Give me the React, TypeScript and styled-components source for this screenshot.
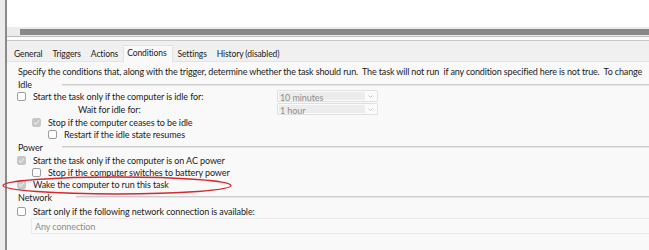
import styled, { createGlobalStyle } from "styled-components";

const GlobalStyle = createGlobalStyle`
  html, body {
    margin: 0;
    padding: 0;
    background: #f9f9f9;
  }
`;

const Frame = styled.div`
  position: relative;
  width: 649px;
  height: 250px;
  overflow: hidden;
  display: flex;
  font-family: Lato, "Noto Sans", sans-serif;
  font-size: 9px;
  letter-spacing: -0.1px;
  color: #1c1c1c;
`;

const Gutter = styled.div`
  width: 5px;
  flex: none;
  background: #ececec;
  border-right: 2px solid #8b8b8b;
`;

const Main = styled.div`
  flex: 1;
  min-width: 0;
  display: flex;
  flex-direction: column;
`;

const ListArea = styled.div`
  height: 27px;
  flex: none;
  background: #ffffff;
`;

const HScroll = styled.div`
  height: 9px;
  flex: none;
  box-sizing: border-box;
  padding: 2px 0 1px 13px;
  background: #ebebeb;
  display: flex;
`;

const Thumb = styled.div`
  flex: 1;
  background: #888888;
`;

const Splitter = styled.div`
  height: 5px;
  flex: none;
  box-sizing: border-box;
  border-top: 1px solid #bcbcbc;
  border-bottom: 1px solid #c8c8c8;
  background: #fbfbfb;
`;

const TabBar = styled.div`
  height: 21px;
  flex: none;
  box-sizing: border-box;
  display: flex;
  align-items: flex-end;
  padding-left: 2px;
  background: #f0f0f0;
  border-bottom: 1px solid #e4e4e4;
`;

const Tab = styled.div<{ $active?: boolean }>`
  height: ${(p) => (p.$active ? 17 : 15)}px;
  line-height: 15px;
  box-sizing: border-box;
  padding: ${(p) => (p.$active ? "0 5px 2px 3px" : "0 4px")};
  margin-bottom: ${(p) => (p.$active ? -1 : 0)}px;
  background: ${(p) => (p.$active ? "#f9f9f9" : "transparent")};
  border: 1px solid ${(p) => (p.$active ? "#e2e2e2" : "transparent")};
  border-bottom: none;
  font-size: 8.5px;
  color: #222222;
  white-space: nowrap;
`;

const Panel = styled.div`
  flex: 1;
  display: flex;
  flex-direction: column;
  padding: 4px 0 0 10px;
  background: #f9f9f9;
`;

const Description = styled.div`
  height: 12px;
  line-height: 12px;
  padding-left: 1px;
  letter-spacing: -0.15px;
  white-space: pre;
`;

const GroupHeader = styled.div<{ $h: number; $top?: number }>`
  height: ${(p) => p.$h}px;
  margin-top: ${(p) => p.$top ?? 0}px;
  display: flex;
  align-items: center;
  padding-left: 1px;
`;

const GroupLabel = styled.span<{ $w: number }>`
  min-width: ${(p) => p.$w}px;
`;

const GroupRule = styled.div`
  flex: 1;
  height: 2px;
  box-sizing: border-box;
  border-top: 1px solid #cdcdcd;
  border-bottom: 1px solid #e6e6e6;
`;

const Row = styled.div<{ $h?: number; $indent?: number }>`
  height: ${(p) => p.$h ?? 12}px;
  display: flex;
  align-items: center;
  padding-left: ${(p) => p.$indent ?? 0}px;
  white-space: pre;
`;

const IdleRow = styled.div<{ $h?: number }>`
  height: ${(p) => p.$h ?? 12}px;
  display: grid;
  grid-template-columns: 260px 101px;
  align-items: center;
`;

const Box = styled.span<{ $checked?: boolean }>`
  width: 9px;
  height: 9px;
  flex: none;
  box-sizing: border-box;
  margin-right: 7px;
  border-radius: 2px;
  border: 1px solid ${(p) => (p.$checked ? "#c7c7c7" : "#9c9c9c")};
  background: ${(p) => (p.$checked ? "#c7c7c7" : "#ffffff")};
  display: flex;
  align-items: center;
  justify-content: center;
`;

const Select = styled.div<{ $h: number }>`
  height: ${(p) => p.$h}px;
  box-sizing: border-box;
  display: flex;
  align-items: stretch;
  padding: 1px;
  border: 1px solid #e0e0e0;
  border-radius: 1px;
  background: #fbfbfb;
`;

const SelectField = styled.div`
  width: 85px;
  padding-left: 1px;
  background: #ececec;
  color: #8e8e8e;
  font-size: 9px;
  line-height: 11px;
  white-space: nowrap;
`;

const Chevron = styled.div`
  flex: 1;
  display: flex;
  align-items: center;
  justify-content: center;
`;

const ConnectionBox = styled.div`
  height: 16px;
  margin-left: 14px;
  box-sizing: border-box;
  padding-left: 3px;
  display: flex;
  align-items: center;
  border: 1px solid #ebebeb;
  border-right: none;
  color: #8c8c8c;
`;

const Annotation = styled.svg`
  position: absolute;
  left: 2px;
  top: 176px;
  pointer-events: none;
`;

const Check = () => (
  <svg width="7" height="7" viewBox="0 0 7 7">
    <path d="M1 3.6 L2.8 5.3 L6 1.6" fill="none" stroke="#ececec" strokeWidth="1.1" />
  </svg>
);

const CheckBox = ({ checked }: { checked?: boolean }) => (
  <Box $checked={checked}>{checked && <Check />}</Box>
);

const DropDown = ({ value, h }: { value: string; h: number }) => (
  <Select $h={h}>
    <SelectField>{value}</SelectField>
    <Chevron>
      <svg width="5" height="3" viewBox="0 0 5 3">
        <path d="M0.5 0.5 L2.5 2.5 L4.5 0.5" fill="none" stroke="#b5b5b5" strokeWidth="0.8" />
      </svg>
    </Chevron>
  </Select>
);

const tabs = ["General", "Triggers", "Actions", "Conditions", "Settings", "History (disabled)"];

export default function App() {
  return (
    <>
      <GlobalStyle />
      <Frame>
        <Gutter />
        <Main>
          <ListArea />
          <HScroll>
            <Thumb />
          </HScroll>
          <Splitter />
          <TabBar>
            {tabs.map((t) => (
              <Tab key={t} $active={t === "Conditions"}>
                {t}
              </Tab>
            ))}
          </TabBar>
          <Panel>
            <Description>
              {"Specify the conditions that, along with the trigger, determine whether the task should run.  The task will not run  if any condition specified here is not true.  To change"}
            </Description>

            <GroupHeader $h={11} $top={1}>
              <GroupLabel $w={44}>Idle</GroupLabel>
              <GroupRule />
            </GroupHeader>
            <IdleRow>
              <Row>
                <CheckBox />
                Start the task only if the computer is idle for:
              </Row>
              <DropDown value="10 minutes" h={12} />
            </IdleRow>
            <IdleRow $h={14}>
              <Row $indent={61}>Wait for idle for:</Row>
              <DropDown value="1 hour" h={12} />
            </IdleRow>
            <Row $indent={15}>
              <CheckBox checked />
              Stop if the computer ceases to be idle
            </Row>
            <Row $indent={31}>
              <CheckBox />
              Restart if the idle state resumes
            </Row>

            <GroupHeader $h={14}>
              <GroupLabel $w={44}>Power</GroupLabel>
              <GroupRule />
            </GroupHeader>
            <Row>
              <CheckBox checked />
              Start the task only if the computer is on AC power
            </Row>
            <Row $indent={15}>
              <CheckBox />
              Stop if the computer switches to battery power
            </Row>
            <Row>
              <CheckBox checked />
              Wake the computer to run this task
            </Row>

            <GroupHeader $h={14}>
              <GroupLabel $w={58}>Network</GroupLabel>
              <GroupRule />
            </GroupHeader>
            <Row $h={14}>
              <CheckBox />
              Start only if the following network connection is available:
            </Row>
            <ConnectionBox>Any connection</ConnectionBox>
          </Panel>
        </Main>
        <Annotation width="232" height="20" viewBox="0 0 232 20">
          <ellipse cx="115" cy="9.5" rx="114" ry="8.5" fill="none" stroke="#d6282d" strokeWidth="1.3" />
        </Annotation>
      </Frame>
    </>
  );
}
